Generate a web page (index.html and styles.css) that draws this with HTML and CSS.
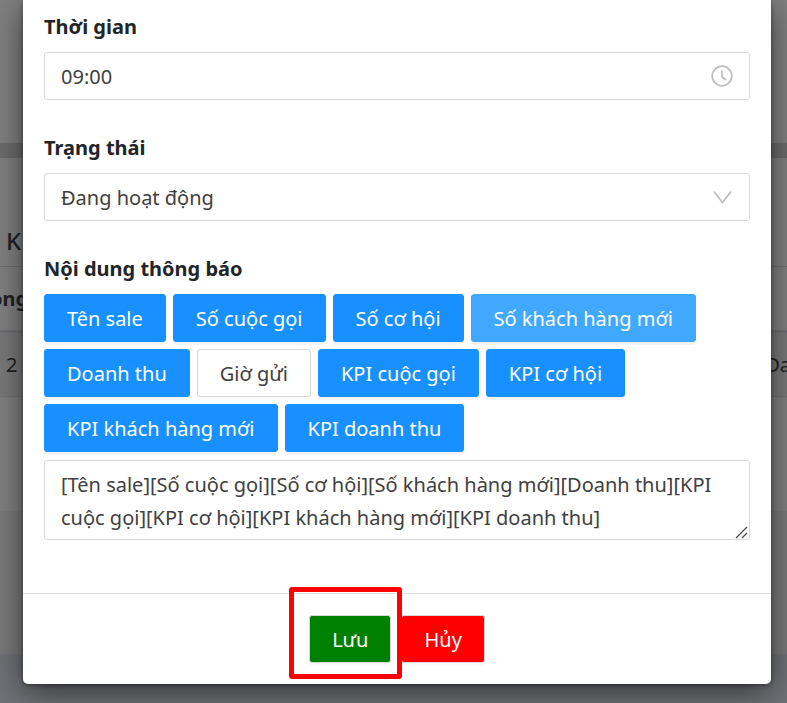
FILE: index.html
```html
<!DOCTYPE html>
<html lang="vi">
<head>
<meta charset="utf-8">
<meta name="viewport" content="width=device-width, initial-scale=1">
<title>Thông báo</title>
<link rel="stylesheet" href="styles.css">
</head>
<body>
<div class="page" aria-hidden="true">
  <div class="page-head"></div>
  <div class="page-card">
    <div class="card-title">K</div>
    <div class="card-columns"><span class="column-name">òng</span></div>
    <div class="card-row"><span>2</span><span class="row-end">Da</span></div>
  </div>
  <div class="page-body"></div>
  <div class="page-foot"></div>
</div>
<div class="overlay">
  <form class="modal" role="dialog" aria-label="Thông báo">
    <div class="modal-body">
      <div class="group">
        <label class="label" for="time">Thời gian</label>
        <div class="control">
          <input class="field" id="time" type="text" value="09:00">
          <svg class="icon" viewBox="0 0 24 24" aria-hidden="true"><circle cx="12" cy="12" r="9.8"/><path d="M12 6.5v6.5l4 3"/></svg>
        </div>
      </div>
      <div class="group">
        <label class="label" for="status">Trạng thái</label>
        <div class="control">
          <select class="field" id="status"><option>Đang hoạt động</option></select>
          <svg class="icon" viewBox="0 0 24 24" aria-hidden="true"><path d="M4 6.500l8.500 11 8.500-11"/></svg>
        </div>
      </div>
      <div class="group">
        <label class="label" for="content">Nội dung thông báo</label>
        <div class="tags">
          <button class="btn primary" type="button">Tên sale</button>
          <button class="btn primary" type="button">Số cuộc gọi</button>
          <button class="btn primary" type="button">Số cơ hội</button>
          <button class="btn primary active" type="button">Số khách hàng mới</button>
          <button class="btn primary" type="button">Doanh thu</button>
          <button class="btn" type="button">Giờ gửi</button>
          <button class="btn primary" type="button">KPI cuộc gọi</button>
          <button class="btn primary" type="button">KPI cơ hội</button>
          <button class="btn primary" type="button">KPI khách hàng mới</button>
          <button class="btn primary" type="button">KPI doanh thu</button>
        </div>
        <div class="control">
          <textarea class="field area" id="content" rows="2">[Tên sale][Số cuộc gọi][Số cơ hội][Số khách hàng mới][Doanh thu][KPI cuộc gọi][KPI cơ hội][KPI khách hàng mới][KPI doanh thu]</textarea>
          <svg class="grip" viewBox="0 0 14 14" aria-hidden="true"><path d="M1 13L12 2M7 13l5-5"/></svg>
        </div>
      </div>
    </div>
    <div class="modal-foot">
      <span class="marked"><button class="btn save" type="button">Lưu</button></span>
      <button class="btn cancel" type="button">Hủy</button>
    </div>
  </form>
</div>
</body>
</html>
```
FILE: styles.css
```css
* { box-sizing: border-box; }
body {
  margin: 0;
  min-height: 100vh;
  position: relative;
  overflow: hidden;
  font: 20px/33px "Noto Sans", "Open Sans", sans-serif;
  color: #404040;
}
.page {
  min-height: 100vh;
  display: flex;
  flex-direction: column;
  background: #808080;
  color: #202226;
}
.page-head { height: 143px; }
.page-card {
  height: 368px;
  border-top: 15px solid #6c6c6c;
}
.card-title {
  padding: 66px 6px 9px;
  border-bottom: 1px solid #707070;
  font-size: 24px;
  font-weight: 500;
}
.card-columns {
  height: 66px;
  padding: 15px 0;
  border-bottom: 3px solid #6f7174;
  font-weight: 700;
}
.column-name { margin-left: -10px; }
.card-row {
  height: 64px;
  padding: 15px 0 15px 6px;
  display: flex;
  justify-content: space-between;
  background: #797979;
  border-bottom: 1px solid #707070;
}
.row-end { margin-right: -4px; }
.page-body { height: 143px; background: #7a7a7a; }
.page-foot { flex: 1; background: #707277; }

.overlay {
  position: absolute;
  inset: 0;
  padding: 0 16px 0 23px;
}
.modal {
  background: #fff;
  border-radius: 0 0 5px 5px;
  box-shadow: 0 8px 32px rgba(0, 0, 0, .55), 0 1px 4px rgba(0, 0, 0, .4);
}
.modal-body { padding: 10px 21px 53px; }
.group + .group { margin-top: 31px; }
.label {
  display: block;
  margin-bottom: 9px;
  font-weight: 700;
  color: #212529;
}
.control { position: relative; }
.field {
  display: block;
  width: 100%;
  height: 48px;
  padding: 0 16px;
  border: 1px solid #d9d9d9;
  border-radius: 3px;
  background: #fff;
  font: inherit;
  color: #404040;
  appearance: none;
}
.area {
  height: 80px;
  padding: 7px 16px;
  resize: none;
  overflow: hidden;
}
.icon {
  position: absolute;
  right: 16px;
  top: 12px;
  width: 24px;
  height: 24px;
  fill: none;
  stroke: #bfbfbf;
  stroke-width: 1.8;
  pointer-events: none;
}
.grip {
  position: absolute;
  right: 1px;
  bottom: 1px;
  width: 14px;
  height: 14px;
  fill: none;
  stroke: #4a4a4a;
  stroke-width: 1.3;
  pointer-events: none;
}
.tags {
  display: flex;
  flex-wrap: wrap;
  gap: 7px;
  margin-bottom: 8px;
}
.btn {
  height: 48px;
  padding: 0 22px;
  border: 1px solid #d9d9d9;
  border-radius: 3px;
  background: #fff;
  box-shadow: 0 3px 0 rgba(0, 0, 0, .02);
  font: inherit;
  color: #404040;
  white-space: nowrap;
}
.primary {
  background: #1890ff;
  border-color: #1890ff;
  color: #fff;
  box-shadow: 0 3px 0 rgba(0, 0, 0, .045);
}
.active { background: #40a9ff; border-color: #40a9ff; }
.modal-foot {
  display: flex;
  justify-content: center;
  gap: 10px;
  padding: 21px;
  border-top: 1px solid #dee2e6;
}
.marked { position: relative; }
.marked::after {
  content: "";
  position: absolute;
  inset: -28px -11px -16px -20px;
  border: 5px solid #f00;
  border-radius: 3px;
  pointer-events: none;
}
.save { background: #008000; color: #fff; }
.cancel { background: #f00; color: #fff; }
```
